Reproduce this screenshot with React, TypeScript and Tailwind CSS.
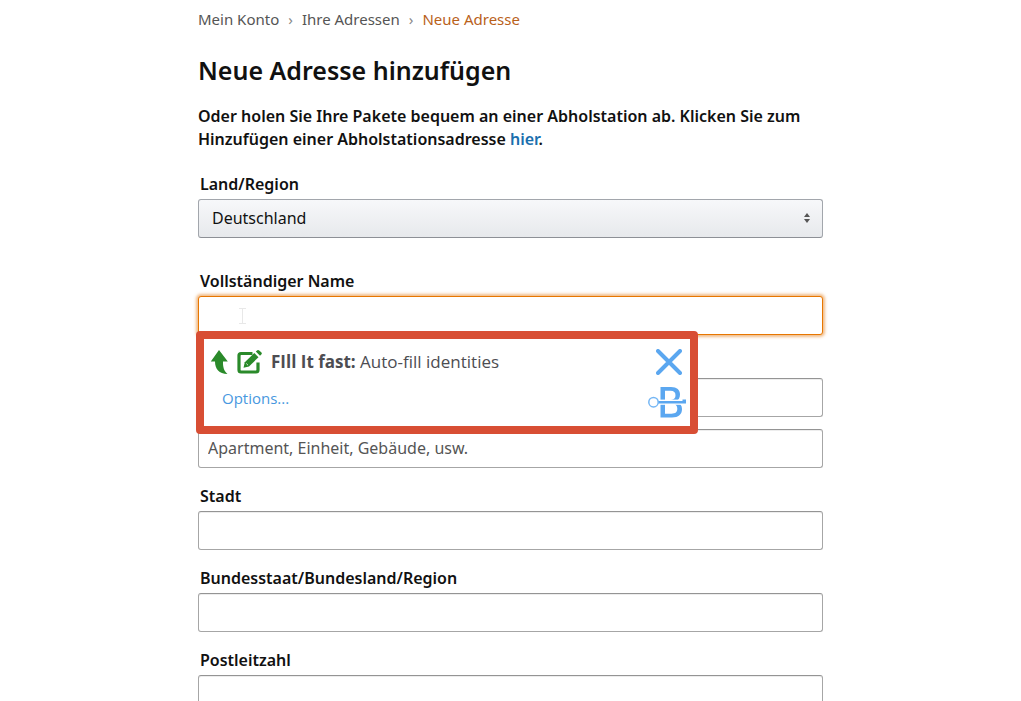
import type { ReactNode } from "react";

const inputBase =
  "block h-[39px] w-full rounded-[3px] border bg-white px-[9px] pb-0.5 text-base text-[#111] outline-none placeholder:text-[#555] placeholder:opacity-100";
const inputPlain =
  inputBase + " border-[#a6a6a6] border-t-[#949494] shadow-[inset_0_1px_0_rgba(0,0,0,0.07)]";
const inputActive =
  inputBase + " border-[#e77600] shadow-[0_0_3px_2px_rgba(228,121,17,0.5)]";

function Field({ id, label, children }: { id: string; label: string; children: ReactNode }) {
  return (
    <div className="flex flex-col gap-[3px]">
      <label htmlFor={id} className="px-0.5 text-base leading-6 font-semibold">
        {label}
      </label>
      {children}
    </div>
  );
}

function ArrowIcon() {
  return (
    <svg viewBox="0 0 18 26" className="h-[26px] w-[18px]" fill="#2a8a2a" aria-hidden="true">
      <path d="M9 1 L17.8 12.5 H13 C12.8 18 14 22 17.5 25 C9 25 5 20 5 12.5 H0.8 Z" />
    </svg>
  );
}

function EditIcon() {
  return (
    <svg viewBox="0 0 27 26" className="h-[26px] w-[27px]" fill="none" aria-hidden="true">
      <path
        d="M16.5 4.5 H5 A2 2 0 0 0 3 6.5 V21 A2 2 0 0 0 5 23 H20 A2 2 0 0 0 22 21 V13.5"
        stroke="#2a8a2a"
        strokeWidth="3.2"
      />
      <path d="M7.500 18.800 L8.800 13.300 L18.300 4 L22.500 8.200 L13 17.500 Z" fill="#2a8a2a" />
      <path d="M19.800 2.600 L21.300 1.300 Q22.300 0.500 23.200 1.400 L25.500 3.500 Q26.300 4.400 25.500 5.300 L24 6.800 Z" fill="#2a8a2a" />
      <path d="M10.300 14.500 L12 16.200" stroke="#fff" strokeWidth="0.8" />
    </svg>
  );
}

function CloseIcon() {
  return (
    <svg viewBox="0 0 26 26" className="size-[26px]" fill="none" aria-hidden="true">
      <path d="M2 2 L24 24 M24 2 L2 24" stroke="#5ba7f0" strokeWidth="4" strokeLinecap="round" />
    </svg>
  );
}

function KeyLogo() {
  return (
    <svg viewBox="0 0 38 32" className="h-8 w-[38px]" fill="none" aria-hidden="true">
      <path
        fillRule="evenodd"
        d="M12.500 1 H23 C29 1 32 4 32 8.500 C32 12 30.500 14 28 15.500 C32 17 34 19.500 34 23 C34 28.500 30.500 31.500 24 31.500 H12.500 Z M17 4.800 V14 H23 C26 14 27.500 12 27.500 9.300 C27.500 6.500 26 4.800 22.500 4.800 Z M17 17.500 V27.700 H23.500 C27.500 27.700 29.300 26 29.300 22.800 C29.300 19.500 27.500 17.500 23.500 17.500 Z"
        fill="#5ba7f0"
      />
      <path d="M10 13.600 H38 V18.800 H10 Z" fill="#fff" />
      <path d="M10 14.900 H34.500 V13.600 H38 V17.600 H10 Z" fill="#5ba7f0" />
      <circle cx="5.500" cy="16.200" r="4.700" fill="#fff" stroke="#74b6f4" strokeWidth="1.500" />
    </svg>
  );
}

function AutofillPopup() {
  return (
    <div className="absolute top-[35px] -left-0.5 z-10 flex w-[502px] max-w-full justify-between rounded-[4px] border-8 border-[#d84e34] bg-white pt-2.5 pr-1 pb-2 pl-1.5 font-['Open_Sans',sans-serif] text-[#4d4d52]">
      <div className="flex flex-col gap-[13px]">
        <div className="flex items-center">
          <ArrowIcon />
          <span className="ml-2 flex">
            <EditIcon />
          </span>
          <p className="ml-2 text-[17px] leading-6">
            <strong className="font-bold">FIll It fast:</strong> Auto-fill identities
          </p>
        </div>
        <a href="#options" className="ml-3 text-[15px] leading-5 text-[#4898e0]">
          Options...
        </a>
      </div>
      <div className="flex flex-col items-end gap-[11px]">
        <button type="button" aria-label="Schließen" className="mr-1 flex">
          <CloseIcon />
        </button>
        <KeyLogo />
      </div>
    </div>
  );
}

export default function App() {
  return (
    <main className="h-screen overflow-hidden bg-white font-['Noto_Sans',sans-serif] text-[15px] text-[#111]">
      <div className="mx-auto flex max-w-[625px] flex-col pt-[7px]">
        <nav aria-label="Brotkrumen" className="flex gap-[9px] leading-6 text-[#555]">
          <a href="#konto">Mein Konto</a>
          <span className="text-[#888]">›</span>
          <a href="#adressen">Ihre Adressen</a>
          <span className="text-[#888]">›</span>
          <span className="text-[#b9611a]">Neue Adresse</span>
        </nav>

        <h1 className="mt-[23px] text-[25px] leading-8 font-semibold">Neue Adresse hinzufügen</h1>

        <p className="mt-[19px] text-base leading-[23px] font-semibold">
          Oder holen Sie Ihre Pakete bequem an einer Abholstation ab. Klicken Sie zum Hinzufügen
          einer Abholstationsadresse{" "}
          <a href="#hier" className="text-[#1a6fae]">
            hier
          </a>
          .
        </p>

        <form className="mt-[21px] flex flex-col gap-4">
          <div className="mb-[15px]">
            <Field id="land" label="Land/Region">
              <div className="relative">
                <select
                  id="land"
                  className="block h-[39px] w-full appearance-none rounded-[3px] border border-[#a2a6ac] border-b-[#8d9096] bg-linear-to-b from-[#f7f8fa] to-[#e7e9ec] px-[13px] pb-0.5 text-base text-[#111] outline-none"
                >
                  <option>Deutschland</option>
                </select>
                <svg
                  viewBox="0 0 6 10"
                  className="pointer-events-none absolute top-[14px] right-[13px] h-2.5 w-1.5"
                  fill="#555"
                  aria-hidden="true"
                >
                  <path d="M3 0 L6 4 H0 Z M0 6 H6 L3 10 Z" />
                </svg>
              </div>
            </Field>
          </div>

          <Field id="name" label="Vollständiger Name">
            <div className="relative">
              <input id="name" type="text" className={inputActive} />
              <svg
                viewBox="0 0 7 16"
                className="pointer-events-none absolute top-3 left-[41px] h-4 w-[7px]"
                fill="none"
                stroke="#e8e8e8"
                aria-hidden="true"
              >
                <path d="M0 0.5 H7 M3.5 0.5 V15.5 M0 15.5 H7" />
              </svg>
              <AutofillPopup />
            </div>
          </Field>

          <div className="flex flex-col gap-3 pt-[27px]">
            <input type="text" aria-label="Straße und Hausnummer" className={inputPlain} />
            <input
              type="text"
              aria-label="Adresszusatz"
              placeholder="Apartment, Einheit, Gebäude, usw."
              className={inputPlain}
            />
          </div>

          <Field id="stadt" label="Stadt">
            <input id="stadt" type="text" className={inputPlain} />
          </Field>
          <Field id="region" label="Bundesstaat/Bundesland/Region">
            <input id="region" type="text" className={inputPlain} />
          </Field>
          <Field id="plz" label="Postleitzahl">
            <input id="plz" type="text" className={inputPlain} />
          </Field>
        </form>
      </div>
    </main>
  );
}
